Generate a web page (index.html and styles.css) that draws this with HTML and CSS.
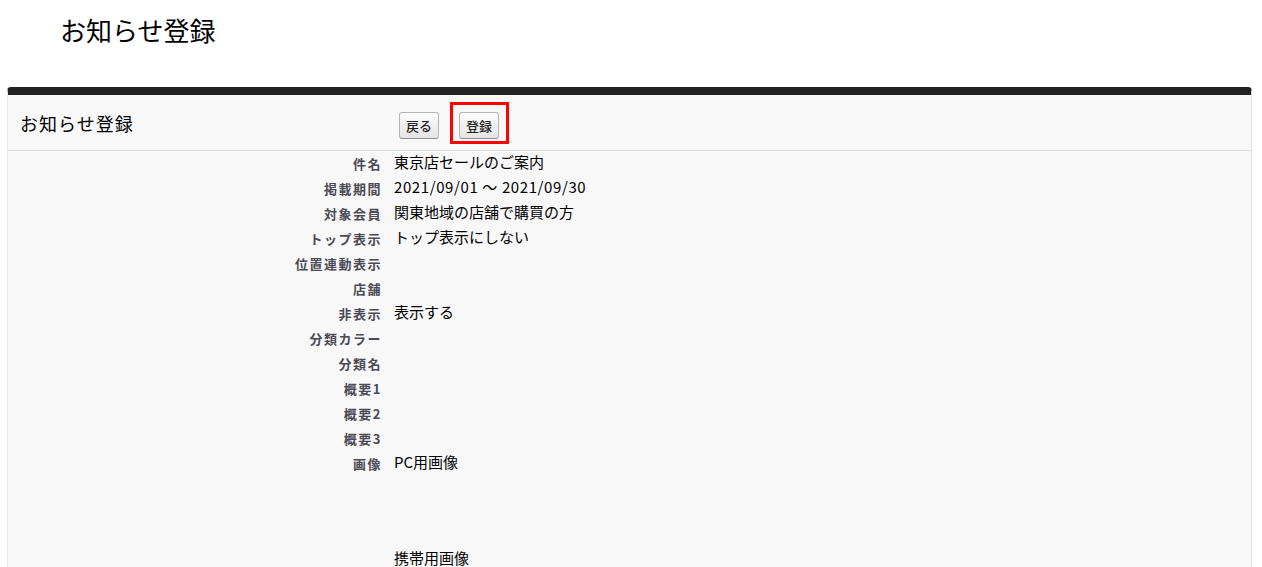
FILE: index.html
```html
<!DOCTYPE html>
<html lang="ja">
<head>
    <meta charset="UTF-8">
    <title>お知らせ登録</title>
    <link rel="stylesheet" href="styles.css">
</head>
<body>
    <h1 class="page-title">お知らせ登録</h1>

    <div class="panel">
        <div class="panel-header">
            <h2 class="panel-title">お知らせ登録</h2>
            <div class="buttons">
                <button type="button" class="btn">戻る</button>
                <span class="highlight">
                    <button type="submit" class="btn">登録</button>
                </span>
            </div>
        </div>

        <div class="detail">
            <div class="label">件名</div>
            <div class="value">東京店セールのご案内</div>

            <div class="label">掲載期間</div>
            <div class="value value-date">2021/09/01 ～ 2021/09/30</div>

            <div class="label">対象会員</div>
            <div class="value">関東地域の店舗で購買の方</div>

            <div class="label">トップ表示</div>
            <div class="value">トップ表示にしない</div>

            <div class="label">位置連動表示</div>
            <div class="value"></div>

            <div class="label">店舗</div>
            <div class="value"></div>

            <div class="label">非表示</div>
            <div class="value">表示する</div>

            <div class="label">分類カラー</div>
            <div class="value"></div>

            <div class="label">分類名</div>
            <div class="value"></div>

            <div class="label">概要1</div>
            <div class="value"></div>

            <div class="label">概要2</div>
            <div class="value"></div>

            <div class="label">概要3</div>
            <div class="value"></div>

            <div class="label">画像</div>
            <div class="value">
                <div>PC用画像</div>
                <div class="image-box"></div>
                <div>携帯用画像</div>
                <div class="image-box"></div>
            </div>
        </div>
    </div>
</body>
</html>
```

FILE: styles.css
```css
body {
    margin: 0;
    padding: 0;
    font-family: "Noto Sans CJK JP", "Noto Sans", sans-serif;
    color: #000;
    background: #fff;
}

.page-title {
    margin: 0;
    padding: 10px 0 0 60px;
    height: 87px;
    box-sizing: border-box;
    font-size: 26px;
    font-weight: normal;
    line-height: 40px;
}

.panel {
    margin: 0 10px 0 7px;
    background: #f8f8f8;
    border-top: 8px solid #222;
    border-left: 1px solid #ececec;
    border-right: 1px solid #e4e4e4;
    border-radius: 4px 4px 0 0;
    min-height: 480px;
}

.panel-header {
    display: flex;
    align-items: center;
    height: 55px;
    border-bottom: 1px solid #dcdcdc;
}

.panel-title {
    margin: 0;
    width: 391px;
    padding-left: 12px;
    box-sizing: border-box;
    font-size: 18px;
    font-weight: normal;
    letter-spacing: 1px;
}

.buttons {
    display: flex;
    align-items: baseline;
    gap: 11px;
}

.btn {
    font-family: inherit;
    font-size: 13px;
    font-weight: 500;
    color: #222;
    height: 27px;
    padding: 0 6px;
    border: 1px solid #b5b5b5;
    border-bottom-color: #8f8f8f;
    border-radius: 3px;
    background: linear-gradient(#fdfdfd, #e4e4e4);
    cursor: pointer;
}

.highlight {
    display: inline-flex;
    padding: 7px 7px 2px 6px;
    border: 3px solid #f00;
}

.detail {
    display: grid;
    grid-template-columns: 374px 1fr;
    column-gap: 12px;
}

.label {
    text-align: right;
    font-size: 13px;
    font-weight: bold;
    letter-spacing: 1.5px;
    color: #4a4a56;
    line-height: 25px;
    height: 25px;
}

.value {
    font-size: 15px;
    line-height: 22px;
    min-height: 25px;
}

.value-date {
    letter-spacing: 0.6px;
}

.image-box {
    height: 74px;
}
```
